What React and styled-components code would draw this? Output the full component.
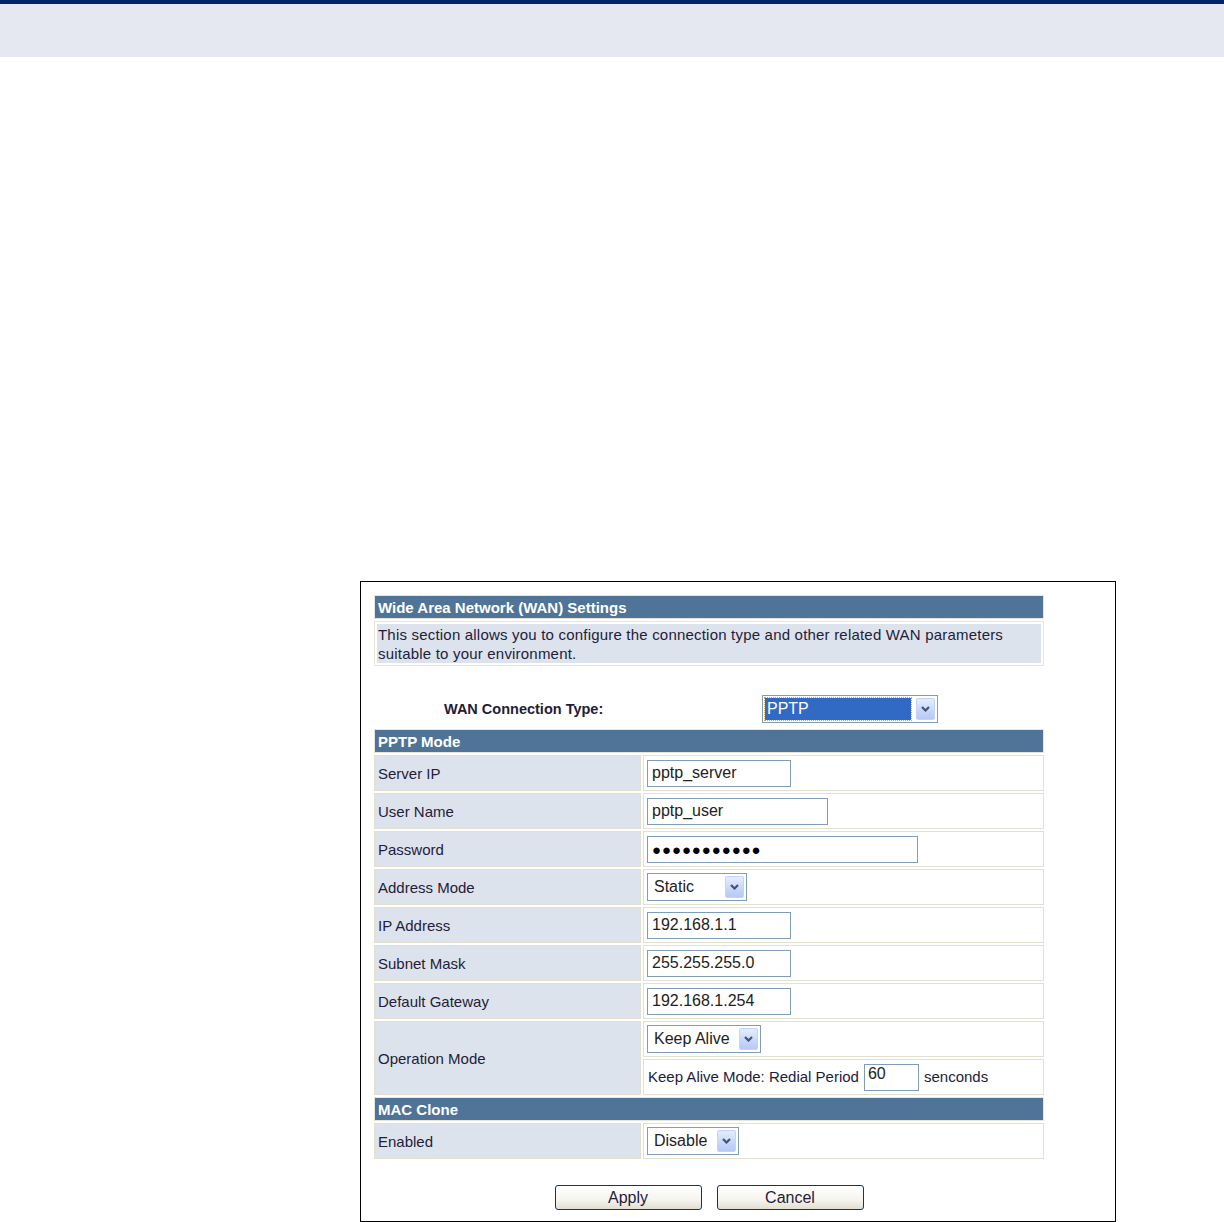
import React from 'react';
import { createGlobalStyle, styled } from 'styled-components';

const GlobalStyle = createGlobalStyle`
  body {
    margin: 0;
    background: #fff;
    font-family: 'Liberation Sans', Arial, sans-serif;
  }
`;

const TopBar = styled.div`
  height: 53px;
  border-top: 4px solid #002466;
  background: #e5e8f1;
`;

const Frame = styled.div`
  width: 732px;
  margin: 524px 0 0 360px;
  border: 1px solid #000;
  padding: 11px 11px 11px 11px;
`;

const Table = styled.table`
  width: 674px;
  border-collapse: separate;
  border-spacing: 2px;
  font-size: 15px;
  color: #231c3a;
`;

const SectionHead = styled.td`
  box-sizing: border-box;
  height: 24px;
  padding: 0 3px;
  background: #4f7498;
  border: 1px solid #e9e6d6;
  color: #fff;
  font-weight: bold;
  font-size: 15px;
`;

const DescCell = styled.td`
  box-sizing: border-box;
  height: 44px;
  padding: 2px;
  border: 1px solid #e9e6d6;
`;

const DescBox = styled.div`
  background: #dde3ec;
  padding: 1px 2px 0 1px;
  line-height: 19px;
  letter-spacing: 0.2px;
`;

const ConnCell = styled.td`
  box-sizing: border-box;
  height: 59px;
  padding: 0 0 4px 0;
  vertical-align: bottom;
`;

const ConnRow = styled.div`
  display: flex;
  align-items: center;
`;

const ConnLabel = styled.span`
  box-sizing: border-box;
  width: 388px;
  padding-left: 70px;
  font-weight: bold;
  font-size: 14.5px;
`;

const LabelCell = styled.td`
  box-sizing: border-box;
  width: 267px;
  height: 36px;
  padding: 0 3px;
  background: #dde3ec;
  border: 1px solid #e4e0cf;
`;

const ValueCell = styled.td`
  box-sizing: border-box;
  height: 36px;
  padding: ${(p) => (p.$text ? '2px 3px 0 4px' : '0 3px')};
  background: #fff;
  border: 1px solid #e4e0cf;
  white-space: nowrap;
`;

const TextInput = styled.input`
  box-sizing: border-box;
  width: ${(p) => p.$w}px;
  height: 27px;
  margin: 0;
  padding: 0 4px;
  border: 1px solid #7f9db9;
  font-family: 'Liberation Sans', Arial, sans-serif;
  font-size: ${(p) => (p.$dots ? '15px' : '16px')};
  letter-spacing: ${(p) => (p.$dots ? '0.9px' : '0')};
  color: ${(p) => (p.$dots ? '#000' : '#222')};
  vertical-align: middle;
  outline: none;
`;

const PeriodInput = styled(TextInput)`
  margin: -2px 5px 0 5px;
  padding: 0 3px 6px;
`;

const SelectBox = styled.div`
  box-sizing: border-box;
  display: inline-flex;
  align-items: stretch;
  width: ${(p) => p.$w}px;
  height: 28px;
  padding: 2px;
  border: 1px solid #7f9db9;
  background: #fff;
  vertical-align: middle;
`;

const SelectText = styled.span`
  flex: 1;
  display: flex;
  align-items: center;
  padding-left: ${(p) => (p.$selected ? '2px' : '4px')};
  margin-right: ${(p) => (p.$selected ? '5px' : '0')};
  font-size: 16px;
  color: ${(p) => (p.$selected ? '#fff' : '#222')};
  background: ${(p) => (p.$selected ? '#316ac5' : 'transparent')};
  outline: ${(p) => (p.$selected ? '1px dotted #d9a441' : 'none')};
`;

const ArrowBox = styled.span`
  width: 17px;
  display: flex;
  align-items: center;
  justify-content: center;
  border: 1px solid #c3d3fd;
  border-radius: 2px;
  background: linear-gradient(180deg, #e6eefc 0%, #c6d6fa 60%, #b7c9f4 100%);
`;

const ButtonRow = styled.div`
  width: 674px;
  display: flex;
  justify-content: center;
  gap: 15px;
  margin-top: 24px;
`;

const Button = styled.button`
  width: 147px;
  height: 25px;
  border: 1px solid #003c74;
  border-radius: 3px;
  background: linear-gradient(180deg, #ffffff 0%, #f5f4ef 60%, #e2ded3 100%);
  font-family: 'Liberation Sans', Arial, sans-serif;
  font-size: 16px;
  color: #231c3a;
  padding: 0;
`;

const Chevron = () => (
  <svg width="9" height="6" viewBox="0 0 9 6">
    <path d="M1 1 L4.5 4.5 L8 1" fill="none" stroke="#3f5478" strokeWidth="2.2" />
  </svg>
);

const Select = ({ w, value, selected }) => (
  <SelectBox $w={w}>
    <SelectText $selected={selected}>{value}</SelectText>
    <ArrowBox>
      <Chevron />
    </ArrowBox>
  </SelectBox>
);

const fields = [
  { label: 'Server IP', value: 'pptp_server', w: 144 },
  { label: 'User Name', value: 'pptp_user', w: 181 },
  { label: 'Password', value: '●●●●●●●●●●●', w: 271, dots: true },
];

const addrFields = [
  { label: 'IP Address', value: '192.168.1.1' },
  { label: 'Subnet Mask', value: '255.255.255.0' },
  { label: 'Default Gateway', value: '192.168.1.254' },
];

export default function App() {
  return (
    <>
      <GlobalStyle />
      <TopBar />
      <Frame>
        <Table>
          <tbody>
            <tr>
              <SectionHead colSpan={2}>Wide Area Network (WAN) Settings</SectionHead>
            </tr>
            <tr>
              <DescCell colSpan={2}>
                <DescBox>
                  This section allows you to configure the connection type and other related WAN parameters
                  suitable to your environment.
                </DescBox>
              </DescCell>
            </tr>
            <tr>
              <ConnCell colSpan={2}>
                <ConnRow>
                  <ConnLabel>WAN Connection Type:</ConnLabel>
                  <Select w={176} value="PPTP" selected />
                </ConnRow>
              </ConnCell>
            </tr>
            <tr>
              <SectionHead colSpan={2}>PPTP Mode</SectionHead>
            </tr>
            {fields.map((f) => (
              <tr key={f.label}>
                <LabelCell>{f.label}</LabelCell>
                <ValueCell>
                  <TextInput $w={f.w} $dots={f.dots} readOnly value={f.value} />
                </ValueCell>
              </tr>
            ))}
            <tr>
              <LabelCell>Address Mode</LabelCell>
              <ValueCell>
                <Select w={100} value="Static" />
              </ValueCell>
            </tr>
            {addrFields.map((f) => (
              <tr key={f.label}>
                <LabelCell>{f.label}</LabelCell>
                <ValueCell>
                  <TextInput $w={144} readOnly value={f.value} />
                </ValueCell>
              </tr>
            ))}
            <tr>
              <LabelCell rowSpan={2}>Operation Mode</LabelCell>
              <ValueCell>
                <Select w={114} value="Keep Alive" />
              </ValueCell>
            </tr>
            <tr>
              <ValueCell $text>
                Keep Alive Mode: Redial Period
                <PeriodInput $w={55} readOnly value="60" />
                senconds
              </ValueCell>
            </tr>
            <tr>
              <SectionHead colSpan={2}>MAC Clone</SectionHead>
            </tr>
            <tr>
              <LabelCell>Enabled</LabelCell>
              <ValueCell>
                <Select w={92} value="Disable" />
              </ValueCell>
            </tr>
          </tbody>
        </Table>
        <ButtonRow>
          <Button>Apply</Button>
          <Button>Cancel</Button>
        </ButtonRow>
      </Frame>
    </>
  );
}
